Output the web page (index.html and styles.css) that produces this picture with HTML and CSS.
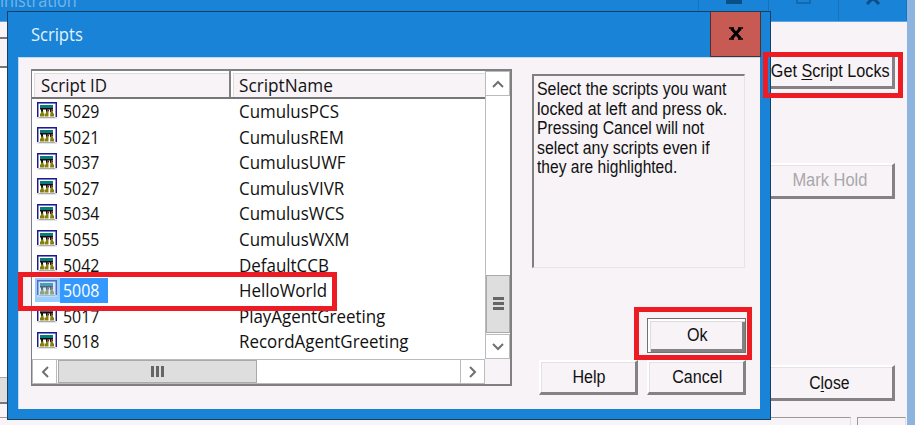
FILE: index.html
```html
<!DOCTYPE html>
<html lang="en">
<head>
<meta charset="utf-8">
<title>Scripts</title>
<link rel="stylesheet" href="styles.css">
</head>
<body>
<svg width="0" height="0" class="defs">
  <symbol id="script" viewBox="0 0 20 17">
    <path fill="#e4e4ea" d="M0 0h20v17H0z"/>
    <path fill="#fff" d="M2 2h16v13H2z"/>
    <path fill="none" stroke="#1d1994" stroke-width="1.4" d="M.7 15V.7h18.6V15"/>
    <path fill="none" stroke="#aaa" d="M2 15.5h16"/>
    <path fill="#087c7c" d="M3 3h13v3.5H3z"/>
    <path fill="#111" d="M3 6h13v1.5H3zM4 7h2v3H4zM9 7h1.5v3H9zM13 7h1.5v3H13z"/>
    <path fill="#8a1010" d="M10.5 7.5h1.5v2h-1.5zM14.5 7.5H16v2h-1.5z"/>
    <path fill="#85800c" d="M4 9.500h2.500v2h1v3H3v-3h1zM9 9.500h2.500v5H8v-3h1zM13.500 9.500H16v2h1v3h-4z"/>
  </symbol>
</svg>
<div class="parent">
  <header class="parent-title"><span class="parent-name">inistration</span>
    <div class="window-controls"><span><i class="min"></i></span><span><i class="max"></i></span><span><svg width="14" height="5" viewBox="0 0 14 5"><path d="M7-2l6 6M7-2L1 4" stroke="#0b4e86" stroke-width="3" fill="none"/></svg></span></div>
  </header>
  <main class="parent-body">
    <div class="left-edge"><i class="field"></i><i class="head"></i><i class="list"></i><i class="scroll"></i></div>
    <div class="actions">
      <button class="btn"><span class="t locks">Get <u>S</u>cript Locks</span></button>
      <button class="btn hold"><span class="t hold-text">Mark Hold</span></button>
      <button class="btn close"><span class="t close-text">C<u>l</u>ose</span></button>
    </div>
  </main>
  <footer class="status"><i></i><i></i></footer>
</div>
<section class="dialog">
  <header class="title"><span class="title-text">Scripts</span><span class="x"><svg width="14" height="13" viewBox="0 0 14 13"><path d="M2.5 1.5l9 10M11.5 1.5l-9 10" stroke="#000" stroke-width="3"/><path d="M0 1h5M9 1h5M0 12h5M9 12h5" stroke="#000" stroke-width="1.6"/></svg></span></header>
  <div class="client">
    <div class="listview">
      <div class="table">
        <div class="row heading"><span class="cell"><b class="s">Script ID</b></span><span class="cell"><b class="s">ScriptName</b></span></div>
        <div class="rows">
          <div class="row"><svg class="ic"><use href="#script"/></svg><span class="id"><b class="s">5029</b></span><span class="name"><b class="s">CumulusPCS</b></span></div>
          <div class="row"><svg class="ic"><use href="#script"/></svg><span class="id"><b class="s">5021</b></span><span class="name"><b class="s">CumulusREM</b></span></div>
          <div class="row"><svg class="ic"><use href="#script"/></svg><span class="id"><b class="s">5037</b></span><span class="name"><b class="s">CumulusUWF</b></span></div>
          <div class="row"><svg class="ic"><use href="#script"/></svg><span class="id"><b class="s">5027</b></span><span class="name"><b class="s">CumulusVIVR</b></span></div>
          <div class="row"><svg class="ic"><use href="#script"/></svg><span class="id"><b class="s">5034</b></span><span class="name"><b class="s">CumulusWCS</b></span></div>
          <div class="row"><svg class="ic"><use href="#script"/></svg><span class="id"><b class="s">5055</b></span><span class="name"><b class="s">CumulusWXM</b></span></div>
          <div class="row"><svg class="ic"><use href="#script"/></svg><span class="id"><b class="s">5042</b></span><span class="name"><b class="s">DefaultCCB</b></span></div>
          <div class="row selected"><span class="ic-wrap"><svg class="ic"><use href="#script"/></svg></span><span class="id"><b class="s">5008</b></span><span class="name"><b class="s">HelloWorld</b></span></div>
          <div class="row"><svg class="ic"><use href="#script"/></svg><span class="id"><b class="s">5017</b></span><span class="name"><b class="s">PlayAgentGreeting</b></span></div>
          <div class="row"><svg class="ic"><use href="#script"/></svg><span class="id"><b class="s">5018</b></span><span class="name"><b class="s">RecordAgentGreeting</b></span></div>
        </div>
      </div>
      <div class="vscroll">
        <span class="arrow"><svg width="12" height="8" viewBox="0 0 12 8"><path d="M1 7l5-5 5 5"/></svg></span>
        <span class="track"></span>
        <span class="vthumb"><i></i><i></i><i></i></span>
        <span class="arrow"><svg width="12" height="8" viewBox="0 0 12 8"><path d="M1 1l5 5 5-5"/></svg></span>
      </div>
      <div class="hscroll">
        <span class="arrow"><svg width="8" height="12" viewBox="0 0 8 12"><path d="M7 1L2 6l5 5"/></svg></span>
        <span class="hthumb"><i></i><i></i><i></i></span>
        <span class="track"></span>
        <span class="arrow"><svg width="8" height="12" viewBox="0 0 8 12"><path d="M1 1l5 5-5 5"/></svg></span>
      </div>
      <div class="corner"></div>
    </div>
    <div class="side">
      <p class="message"><span class="t m1">Select the scripts you want</span><span class="t m2">locked at left and press ok.</span><span class="t m3">Pressing Cancel will not</span><span class="t m4">select any scripts even if</span><span class="t m5">they are highlighted.</span></p>
      <div class="buttons">
        <button class="btn ok"><span class="t">Ok</span></button>
        <button class="btn"><span class="t">Help</span></button>
        <button class="btn"><span class="t">Cancel</span></button>
      </div>
    </div>
  </div>
</section>
<div class="mark mark-locks"></div>
<div class="mark mark-row"></div>
<div class="mark mark-ok"></div>
</body>
</html>
```
FILE: styles.css
```css
* { box-sizing: border-box; }
body { margin: 0; width: 915px; height: 425px; overflow: hidden; position: relative; background: #f7f3f7; font-family: "Liberation Sans", Arial, sans-serif; color: #111; }
.defs { position: absolute; }
i { display: block; }
.parent { height: 425px; border-right: 8px solid #8cb4de; display: flex; flex-direction: column; }
.parent-title { height: 22px; flex: none; background: #1883d7; border-bottom: 1px solid #60a5df; display: flex; justify-content: space-between; overflow: hidden; }
.parent-name { font: 18px/20px "Open Sans", sans-serif; color: #78b5e7; margin-top: -10px; transform: scaleX(.9); transform-origin: 0 0; }
.window-controls { display: flex; height: 21px; }
.window-controls span { width: 70px; border-left: 1px solid #1873bb; display: flex; justify-content: center; align-items: flex-start; }
.window-controls span:last-child { width: 69px; border-right: 1px solid #1873bb; }
.min { width: 16px; height: 4px; background: #0b4e86; }
.max { width: 15px; height: 4px; border: solid #126bb0; border-width: 0 2px 2px; }
.parent-body { flex: 1; display: flex; justify-content: space-between; }
.left-edge { width: 8px; }
.left-edge .field { height: 17px; border-bottom: 2px solid #777; }
.left-edge .head { height: 29px; border-bottom: 2px solid #777; }
.left-edge .list { height: 309px; background: #fff; }
.left-edge .scroll { height: 27px; background: #dedede; border-top: 1px solid #aaa; border-bottom: 2px solid #777; }
.actions { width: 142px; margin-right: 12px; padding-top: 31px; }
.btn { display: flex; align-items: center; justify-content: center; width: 99px; height: 35px; padding: 0 0 2px; background: #f7f3f7; border: solid; border-width: 2px 3px 3px 2px; border-color: #fff #848284 #848284 #fff; box-shadow: inset 1px 1px #e5e2e5; font: 17.5px/20px "Liberation Sans", Arial, sans-serif; color: #111; }
.t { display: block; white-space: nowrap; transform: scaleX(.9); }
u { text-decoration: underline; text-decoration-thickness: 1px; text-underline-offset: 2px; }
.actions .btn { width: 142px; height: 36px; }
.actions .hold { margin-top: 74px; color: #aaa7aa; }
.actions .close { margin-top: 166px; }
.locks { transform: translate(7px, 1px) scaleX(.925); }
.close-text { transform: translate(6px, 1px) scaleX(.9); }
.hold-text { transform: translateX(6px) scaleX(.94); }
.status { height: 8px; display: flex; gap: 6px; }
.status i { width: 851px; border-top: 1px solid #999; border-right: 1px solid #ddd; }
.status i:last-child { width: 49px; border-left: 1px solid #999; }
.dialog { position: absolute; left: 7px; top: 11px; width: 764px; height: 409px; background: #1883d7; border: 1px solid #17405f; padding: 0 10px; }
.title { height: 45px; display: flex; justify-content: space-between; }
.title-text { font: 18px/45px "Open Sans", sans-serif; color: #e4f1fb; transform: scaleX(.92); transform-origin: 0 0; padding-left: 14px; }
.x { width: 51px; margin-right: -1px; background: #c75b53; border: 1px solid #54302d; border-top: 0; display: flex; align-items: center; justify-content: center; }
.x svg { margin-top: -2px; }
.client { height: 352px; background: #f7f3f7; border-left: 1px solid #bddaf1; border-top: 1px solid #bddaf1; display: flex; gap: 20px; padding: 11px 0 0 12px; }
.listview { width: 481px; height: 317px; border: 2px solid #808080; border-left-width: 1px; background: #fff; display: grid; grid-template-columns: 453px 25px; grid-template-rows: 288px 25px; }
.table { overflow: hidden; }
.row { display: flex; height: 25.55px; align-items: center; }
.s { display: inline-block; font: 18.5px/23px "Open Sans", sans-serif; transform: scaleX(.915); transform-origin: 0 0; white-space: nowrap; }
.heading { height: 28px; background: #f7f3f7; border-bottom: 2px solid #777; }
.heading .cell { width: 199px; height: 26px; padding: 2px 0 0 9px; border-right: 2px solid #808080; box-shadow: inset 2px 2px #fff, inset 3px 3px #ddd; }
.heading .cell:last-child { width: 254px; padding-left: 8px; border: 0; }
.heading .s { transform: scaleX(.93); }
.heading .cell:first-child .s { transform: scaleX(.91); }
.ic { width: 20px; height: 17px; margin: -3px 3px 0 5px; display: block; flex: none; }
.ic-wrap { width: 28px; height: 25px; padding-top: 5px; background: linear-gradient(#99ccff, #99ccff) 3px 0 / 25px 24px no-repeat; }
.ic-wrap .ic { opacity: .55; }
.id { width: 48px; height: 25px; padding-left: 3px; margin-right: 131px; }
.id .s { transform: scaleX(.86); }
.selected .id { background: #3399ff; color: #fff; }
.name { height: 25px; }
.arrow { width: 25px; height: 25px; flex: none; background: #fff; border: 1px solid #bbb; display: flex; align-items: center; justify-content: center; }
.arrow path { fill: none; stroke: #707070; stroke-width: 2; }
.vscroll { display: flex; flex-direction: column; border-left: 1px solid #bbb; }
.vscroll .arrow { width: 24px; border-left: 0; }
.track { flex: 1; background: #fff; }
.vthumb { height: 58px; margin-bottom: 1px; background: #dedede; border: 1px solid #aaa; display: flex; flex-direction: column; gap: 2px; align-items: center; justify-content: center; padding-bottom: 2px; }
.vthumb i { width: 11px; height: 3px; background: #666; }
.hscroll { display: flex; border-top: 1px solid #bbb; border-bottom: 1px solid #bbb; }
.hscroll .arrow { height: 23px; border-top: 0; border-bottom: 0; }
.hthumb { width: 199px; margin-left: 1px; background: #dedede; border: 1px solid #aaa; display: flex; gap: 2px; align-items: center; justify-content: center; }
.hthumb i { width: 3px; height: 11px; background: #666; }
.corner { background: #f7f3f7; }
.side { width: 214px; padding-top: 5px; }
.message { margin: 0; width: 213px; height: 194px; border: solid; border-width: 2px 1px 1px 2px; border-color: #808080 #e5e5e5 #e5e5e5 #808080; padding: 4px 0 0 3px; font-size: 17.5px; line-height: 19.5px; }
.message .t { transform-origin: 0 0; width: max-content; }
.message .m1 { transform: scaleX(.91); }
.message .m2 { transform: scaleX(.914); }
.message .m4 { transform: scaleX(.905); }
.message .m5 { transform: scaleX(.89); }
.buttons { display: grid; grid-template-columns: 99px 99px; column-gap: 9px; row-gap: 7px; margin: 50px 0 0 7px; }
.buttons .t { transform: translate(1px, 1px) scaleX(.92); }
.ok { grid-column: 2; border: 1px solid #707070; box-shadow: inset 2px 2px #fff, inset 3px 3px #ddd, inset -3px -3px #848284; }
.buttons .ok .t { transform: translate(1px, 0) scaleX(.92); }
.mark { position: absolute; border: 5px solid #ed1c24; }
.mark-locks { left: 763px; top: 52px; width: 140px; height: 46px; }
.mark-row { left: 18px; top: 272px; width: 319px; height: 39px; }
.mark-ok { left: 634px; top: 307px; width: 118px; height: 53px; }
```
